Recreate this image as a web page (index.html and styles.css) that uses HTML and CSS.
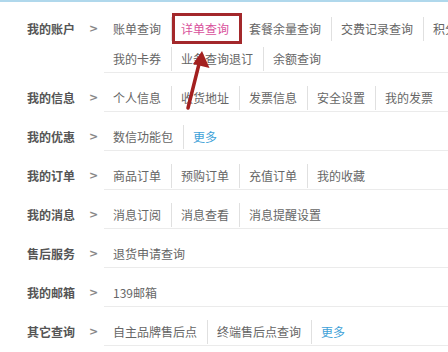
FILE: index.html
```html
<!DOCTYPE html>
<html lang="zh-CN">
<head>
    <meta charset="UTF-8">
    <meta name="viewport" content="width=device-width, initial-scale=1.0">
    <title>我的账户</title>
    <link rel="stylesheet" href="styles.css">
</head>
<body>
    <div class="page">
        <div class="menu">
            <div class="row row-first">
                <div class="side"><span class="name">我的账户</span><span class="arrow">&gt;</span></div>
                <div class="list">
                    <ul class="links links-wide">
                        <li><a href="#">账单查询</a></li>
                        <li><a href="#" class="active">详单查询</a></li>
                        <li><a href="#">套餐余量查询</a></li>
                        <li><a href="#">交费记录查询</a></li>
                        <li><a href="#">积分查询</a></li>
                        <li><a href="#">我的卡券</a></li>
                        <li><a href="#">业务查询退订</a></li>
                        <li><a href="#">余额查询</a></li>
                    </ul>
                </div>
            </div>
            <div class="row">
                <div class="side"><span class="name">我的信息</span><span class="arrow">&gt;</span></div>
                <div class="list">
                    <ul class="links">
                        <li><a href="#">个人信息</a></li>
                        <li><a href="#">收货地址</a></li>
                        <li><a href="#">发票信息</a></li>
                        <li><a href="#">安全设置</a></li>
                        <li><a href="#">我的发票</a></li>
                    </ul>
                </div>
            </div>
            <div class="row">
                <div class="side"><span class="name">我的优惠</span><span class="arrow">&gt;</span></div>
                <div class="list">
                    <ul class="links">
                        <li><a href="#">数信功能包</a></li>
                        <li><a href="#" class="more">更多</a></li>
                    </ul>
                </div>
            </div>
            <div class="row">
                <div class="side"><span class="name">我的订单</span><span class="arrow">&gt;</span></div>
                <div class="list">
                    <ul class="links">
                        <li><a href="#">商品订单</a></li>
                        <li><a href="#">预购订单</a></li>
                        <li><a href="#">充值订单</a></li>
                        <li><a href="#">我的收藏</a></li>
                    </ul>
                </div>
            </div>
            <div class="row">
                <div class="side"><span class="name">我的消息</span><span class="arrow">&gt;</span></div>
                <div class="list">
                    <ul class="links">
                        <li><a href="#">消息订阅</a></li>
                        <li><a href="#">消息查看</a></li>
                        <li><a href="#">消息提醒设置</a></li>
                    </ul>
                </div>
            </div>
            <div class="row">
                <div class="side"><span class="name">售后服务</span><span class="arrow">&gt;</span></div>
                <div class="list">
                    <ul class="links">
                        <li><a href="#">退货申请查询</a></li>
                    </ul>
                </div>
            </div>
            <div class="row">
                <div class="side"><span class="name">我的邮箱</span><span class="arrow">&gt;</span></div>
                <div class="list">
                    <ul class="links">
                        <li><a href="#">139邮箱</a></li>
                    </ul>
                </div>
            </div>
            <div class="row">
                <div class="side"><span class="name">其它查询</span><span class="arrow">&gt;</span></div>
                <div class="list">
                    <ul class="links">
                        <li><a href="#">自主品牌售后点</a></li>
                        <li><a href="#">终端售后点查询</a></li>
                        <li><a href="#" class="more">更多</a></li>
                    </ul>
                </div>
            </div>
        </div>

        <!-- annotation drawn over the menu -->
        <div class="mark-box"></div>
        <svg class="mark-arrow" width="448" height="352" viewBox="0 0 448 352">
            <line x1="188" y1="108" x2="199" y2="64" stroke="#a3201f" stroke-width="3.5" stroke-linecap="round"/>
            <polygon points="202,51 209.5,68 193,64" fill="#a3201f"/>
        </svg>
    </div>
</body>
</html>
```

FILE: styles.css
```css
html, body {
    margin: 0;
    padding: 0;
    background: #fff;
}

body {
    font-family: "Noto Sans CJK SC", "Noto Sans", sans-serif;
    font-size: 12px;
    color: #666;
}

.page {
    position: relative;
    width: 448px;
    height: 352px;
    overflow: hidden;
    border-top: 2px solid #b0d8ec;
    box-sizing: border-box;
}

.menu {
    width: 600px;
}

.row {
    display: flex;
}

.side {
    width: 104px;
    flex-shrink: 0;
    display: flex;
    padding: 13px 0 0 27px;
    box-sizing: border-box;
    line-height: 24px;
}

.name {
    width: 62px;
    color: #555;
    font-weight: bold;
}

.arrow {
    color: #888;
    font-family: "DejaVu Sans", sans-serif;
    font-size: 11px;
    font-weight: bold;
}

.list {
    flex: 1;
    padding: 13px 0 1px;
    border-bottom: 1px solid #ebebeb;
}

.row-first .side,
.row-first .list {
    padding-top: 15px;
}

.links {
    display: flex;
    flex-wrap: wrap;
    row-gap: 6px;
    margin: 0;
    padding: 0;
    list-style: none;
}

.links-wide {
    width: 420px;
}

.links li {
    padding: 2px 10px 2px 9px;
    line-height: 20px;
    border-right: 1px solid #e0e0e0;
}

.links li:last-child {
    border-right: none;
}

.links a {
    color: #666;
    text-decoration: none;
}

.links a.active {
    color: #d9519c;
}

.links a.more {
    color: #41a2d8;
}

.mark-box {
    position: absolute;
    left: 172px;
    top: 11px;
    width: 64px;
    height: 25px;
    border: 3px solid #a3282b;
}

.mark-arrow {
    position: absolute;
    left: 0;
    top: -2px;
    pointer-events: none;
}
```
